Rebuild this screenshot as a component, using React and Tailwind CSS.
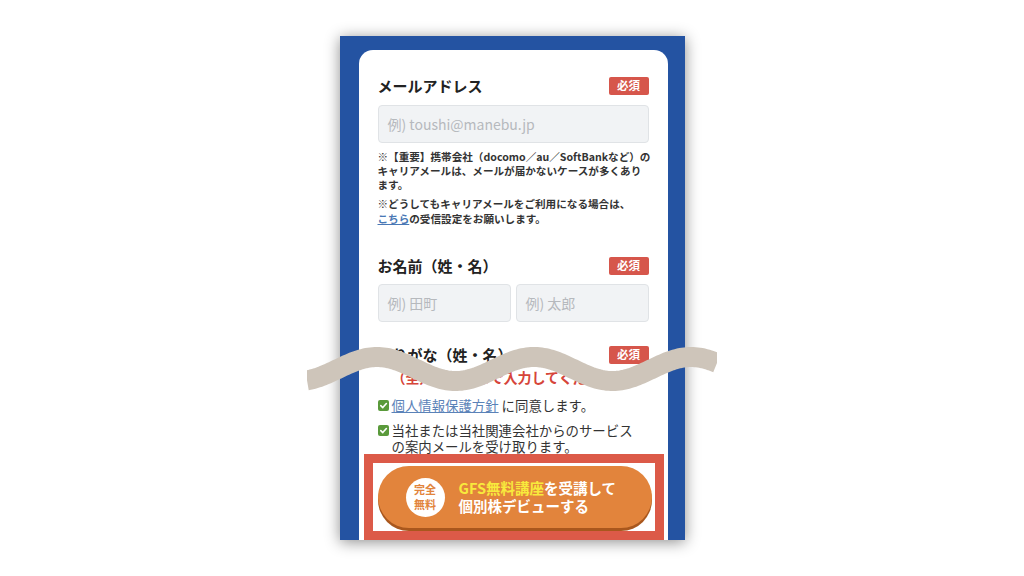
import React from "react";

function Badge() {
  return (
    <span className="flex h-[18px] w-[40px] items-center justify-center rounded-[2px] bg-[#d6564b] text-[11.5px] font-bold leading-none text-white">
      必須
    </span>
  );
}

function FieldHead({ label }) {
  return (
    <div className="flex h-[22px] items-center justify-between">
      <span className="text-[15px] font-bold leading-[22px] text-[#222]">{label}</span>
      <Badge />
    </div>
  );
}

function Field({ placeholder, className = "" }) {
  return (
    <div
      className={
        "flex h-[38px] items-center rounded-[4px] border border-[#e0e3e6] bg-[#f1f3f5] pl-[9px] text-[14px] text-[#b6b9bd] " +
        className
      }
    >
      {placeholder}
    </div>
  );
}

function Check() {
  return (
    <span className="mt-[3px] flex h-[11px] w-[11px] shrink-0 items-center justify-center rounded-[2px] bg-[#5a9a3b]">
      <svg width="9" height="9" viewBox="0 0 10 10">
        <path d="M2 5.2 L4.2 7.3 L8.2 2.8" fill="none" stroke="#fff" strokeWidth="1.8" strokeLinecap="round" strokeLinejoin="round" />
      </svg>
    </span>
  );
}

function Wave() {
  const W = 410;
  const H = 66;
  const c = 31;
  const A = 12;
  const lambda = 157;
  const crest = 70;
  const pts = [];
  for (let x = 0; x <= W; x += 2) {
    const y = c - A * Math.cos((2 * Math.PI * (x - crest)) / lambda);
    pts.push(`${x},${y.toFixed(2)}`);
  }
  return (
    <svg className="absolute left-[307px] top-[338px]" width={W} height={H} viewBox={`0 0 ${W} ${H}`}>
      <polyline points={pts.join(" ")} fill="none" stroke="#cec5ba" strokeWidth="20" strokeLinecap="butt" />
    </svg>
  );
}

export default function App() {
  return (
    <div className="relative flex h-[576px] w-[1024px] items-center justify-center overflow-hidden bg-white font-['Noto_Sans_CJK_JP','Noto_Sans',sans-serif]">
      <div className="h-[504px] w-[345px] overflow-hidden bg-[#2453a2] pl-[19px] pr-[17px] pt-[14px] shadow-[0_2px_14px_rgba(0,0,0,0.45)]">
        <div className="h-[520px] w-[309px] rounded-t-[14px] bg-white">
          <div className="px-[19px] pt-[25px]">
            <FieldHead label="メールアドレス" />
            <Field className="mt-[8px]" placeholder="例) toushi@manebu.jp" />
            <p className="mt-[7px] whitespace-nowrap text-[10.6px] font-bold leading-[14px] text-[#333]">
              ※【重要】携帯会社（docomo／au／SoftBankなど）の
              <br />
              キャリアメールは、メールが届かないケースが多くあり
              <br />
              ます。
            </p>
            <p className="mt-[4px] whitespace-nowrap text-[10.6px] font-bold leading-[15px] text-[#333]">
              ※どうしてもキャリアメールをご利用になる場合は、
              <br />
              <span className="text-[#4a78b5] underline">こちら</span>の受信設定をお願いします。
            </p>

            <div className="mt-[29px]">
              <FieldHead label="お名前（姓・名）" />
            </div>
            <div className="mt-[7px] flex gap-[5px]">
              <Field className="flex-1" placeholder="例) 田町" />
              <Field className="flex-1" placeholder="例) 太郎" />
            </div>

            <div className="mt-[22px]">
              <FieldHead label="ふりがな（姓・名）" />
            </div>
            <p className="mt-[1px] whitespace-nowrap pl-[14px] text-[14px] font-bold leading-[20px] text-[#d6453a]">
              （全角ひらがなで入力してください）
            </p>

            <div className="mt-[10px] flex gap-[3px] text-[13.4px] leading-[16px] text-[#333]">
              <Check />
              <span>
                <span className="text-[#5a82b8] underline">個人情報保護方針</span> に同意します。
              </span>
            </div>
            <div className="mt-[9px] flex gap-[3px] text-[13.4px] leading-[16px] text-[#333]">
              <Check />
              <span className="whitespace-nowrap">
                当社または当社関連会社からのサービス
                <br />
                の案内メールを受け取ります。
              </span>
            </div>
          </div>

          <div className="ml-[5px] w-[300px] border-[9px] border-[#dc5a48] bg-white">
            <div className="h-[68px] overflow-hidden pl-[5px] pr-[3px] pt-[3px]">
              <div className="flex h-[62px] items-center rounded-full bg-[#e2843c] pl-[28px] shadow-[0_3px_0_#a9571d]">
                <div className="flex h-[39px] w-[39px] flex-col items-center justify-center rounded-full bg-white text-[11px] font-bold leading-[15px] text-[#e2843c]">
                  <span>完全</span>
                  <span>無料</span>
                </div>
                <div className="ml-[14px] text-[14.5px] font-bold leading-[18px] text-white">
                  <div>
                    <span className="text-[#f8ea3c]">GFS無料講座</span>を受講して
                  </div>
                  <div>個別株デビューする</div>
                </div>
              </div>
            </div>
          </div>
        </div>
      </div>
      <Wave />
    </div>
  );
}
